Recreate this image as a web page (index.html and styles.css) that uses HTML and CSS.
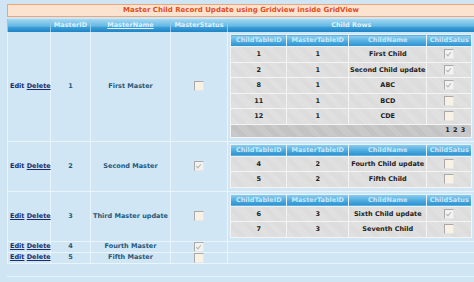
FILE: index.html
```html
<!DOCTYPE html>
<html>
<head>
<meta charset="UTF-8">
<title>Master Child Record Update</title>
<link rel="stylesheet" href="styles.css">
</head>
<body>
	<div class="caption">Master Child Record Update using Gridview inside GridView</div>
	<table class="master">
		<colgroup>
			<col class="c-act"><col class="c-id"><col class="c-name"><col class="c-status"><col class="c-child">
		</colgroup>
		<tr class="head">
			<th></th><th>MasterID</th><th><a>MasterName</a></th><th>MasterStatus</th><th>Child Rows</th>
		</tr>
		<tr>
			<td class="act">Edit <a>Delete</a></td><td>1</td><td>First Master</td><td><span class="chk"></span></td>
			<td class="sub">
				<table class="child">
					<colgroup><col class="k1"><col class="k2"><col class="k3"><col class="k4"></colgroup>
					<tr class="chead"><th>ChildTableID</th><th>MasterTableID</th><th>ChildName</th><th>ChildSatus</th></tr>
					<tr><td>1</td><td>1</td><td>First Child</td><td><span class="chk on"></span></td></tr>
					<tr><td>2</td><td>1</td><td>Second Child update</td><td><span class="chk on"></span></td></tr>
					<tr><td>8</td><td>1</td><td>ABC</td><td><span class="chk on"></span></td></tr>
					<tr><td>11</td><td>1</td><td>BCD</td><td><span class="chk"></span></td></tr>
					<tr><td>12</td><td>1</td><td>CDE</td><td><span class="chk"></span></td></tr>
					<tr class="pager"><td colspan="4">1 2 3</td></tr>
				</table>
			</td>
		</tr>
		<tr>
			<td class="act">Edit <a>Delete</a></td><td>2</td><td>Second Master</td><td><span class="chk on"></span></td>
			<td class="sub">
				<table class="child">
					<colgroup><col class="k1"><col class="k2"><col class="k3"><col class="k4"></colgroup>
					<tr class="chead"><th>ChildTableID</th><th>MasterTableID</th><th>ChildName</th><th>ChildSatus</th></tr>
					<tr><td>4</td><td>2</td><td>Fourth Child update</td><td><span class="chk"></span></td></tr>
					<tr><td>5</td><td>2</td><td>Fifth Child</td><td><span class="chk"></span></td></tr>
				</table>
			</td>
		</tr>
		<tr>
			<td class="act"><a>Edit</a> <a>Delete</a></td><td>3</td><td>Third Master update</td><td><span class="chk"></span></td>
			<td class="sub">
				<table class="child">
					<colgroup><col class="k1"><col class="k2"><col class="k3"><col class="k4"></colgroup>
					<tr class="chead"><th>ChildTableID</th><th>MasterTableID</th><th>ChildName</th><th>ChildSatus</th></tr>
					<tr><td>6</td><td>3</td><td>Sixth Child update</td><td><span class="chk on"></span></td></tr>
					<tr><td>7</td><td>3</td><td>Seventh Child</td><td><span class="chk"></span></td></tr>
				</table>
			</td>
		</tr>
		<tr class="slim">
			<td class="act"><a>Edit</a> <a>Delete</a></td><td>4</td><td>Fourth Master</td><td><span class="chk on"></span></td><td></td>
		</tr>
		<tr class="slim">
			<td class="act"><a>Edit</a> <a>Delete</a></td><td>5</td><td>Fifth Master</td><td><span class="chk"></span></td><td></td>
		</tr>
	</table>
	<div class="foot"></div>
</body>
</html>
```

FILE: styles.css
```css
body{
	margin: 0;
	padding: 4px 0 0 7px;
	background: #cfe5f3;
	font: bold 6.5px/1 "DejaVu Sans", Verdana, sans-serif;
	overflow: hidden;
	height: 278px;
}
.caption{
	height: 11px;
	line-height: 11px;
	background: #fce3cf;
	border: 1px solid #eda677;
	border-right: 0;
	color: #df4d25;
	font-size: 7px;
	text-align: center;
	margin-bottom: 2px;
}

.master{
	width: 467px;
	border-collapse: collapse;
	table-layout: fixed;
}
.c-act{ width: 43px; }
.c-id{ width: 40px; }
.c-name{ width: 80px; }
.c-status{ width: 57px; }
.c-child{ width: 247px; }

.master .head th{
	height: 13px;
	padding: 0;
	background: linear-gradient(#a3d8f2, #62b8e4 55%, #3b9cd6 65%, #1f84c6);
	color: #dff0fb;
	font-weight: bold;
	border-left: 1px solid #8fcbe9;
}
.master .head th a{ text-decoration: underline; }
.master td{
	padding: 0;
	text-align: center;
	color: #24597c;
	background: #d0e6f4;
	border-left: 1px solid #e9f4fb;
	border-bottom: 1px solid #e9f4fb;
}
.master td.act{
	color: #1b2c6a;
	text-align: left;
	padding-left: 2px;
	white-space: nowrap;
}
.act a{ text-decoration: underline; }
.master tr.slim td{ height: 10px; }

.sub{ padding: 2px 0 3px !important; }

.child{
	width: 241px;
	margin: 0 auto;
	border-collapse: collapse;
	table-layout: fixed;
	border: 1px solid #8ba6bb;
}
.k1{ width: 56px; }
.k2{ width: 62px; }
.k3{ width: 78px; }
.k4{ width: 45px; }
.child .chead th{
	height: 11px;
	padding: 0;
	background: linear-gradient(#8fd0f0, #4aa9dd 60%, #2c8fd0);
	color: #c9e7f8;
	font-weight: bold;
	border: 1px solid #e6f3fa;
}
.child td{
	height: 14.5px;
	color: #222;
	background-color: #d9d9d9;
	background-image: repeating-linear-gradient(45deg, rgba(255,255,255,.28) 0 1px, transparent 1px 2px);
	border: 1px solid #f4f4f4;
}
.child tr.pager td{
	height: 12px;
	text-align: right;
	padding-right: 6px;
	word-spacing: 1px;
	background-color: #bdbdbd;
}

.chk{
	display: inline-block;
	width: 8px;
	height: 8px;
	vertical-align: middle;
	border: 1px solid #a9a9a9;
	border-right-color: #e6e6e6;
	border-bottom-color: #e6e6e6;
	background: #f7f2e4;
	position: relative;
}
.chk.on{ background: #f2f2f0; }
.chk.on:after{
	content: "";
	position: absolute;
	left: 2px; top: 1px;
	width: 2px; height: 4px;
	border: solid #b5b5b5;
	border-width: 0 1px 1px 0;
	transform: rotate(40deg);
}

.foot{
	height: 12px;
	border-bottom: 1px solid #e6f2fa;
}
```
